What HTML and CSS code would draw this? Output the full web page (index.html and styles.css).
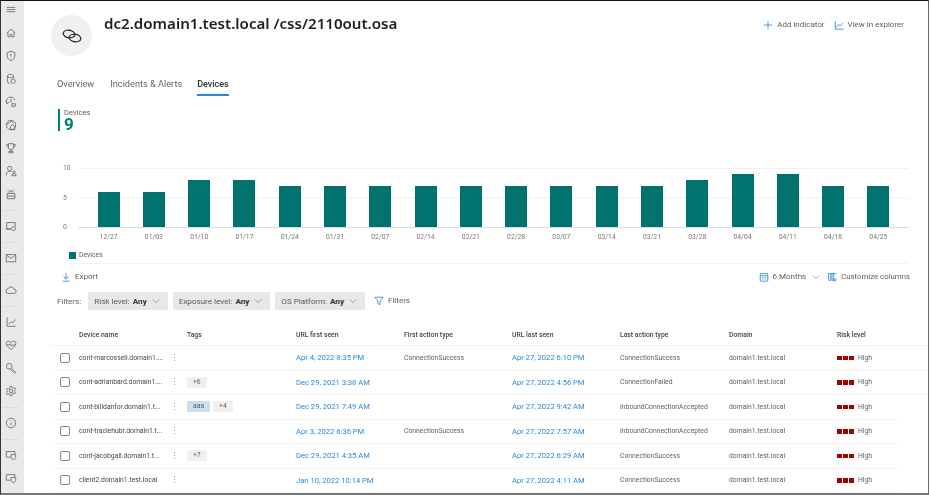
FILE: index.html
```html
<!DOCTYPE html>
<html lang="en">
<head>
    <meta charset="UTF-8">
    <meta name="viewport" content="width=device-width, initial-scale=1.0">
    <title>dc2.domain1.test.local /css/2110out.osa</title>
    <link rel="stylesheet" href="styles.css">
</head>
<body>
    <svg class="hidden" aria-hidden="true">
        <symbol id="i-chevron" viewBox="0 0 10 10"><path d="M1 3l4 4 4-4"/></symbol>
    </svg>
    <div class="frame">
        <nav class="sidebar">
            <div class="nav-item nav-first"><svg viewBox="0 0 14 14"><path d="M2 4h10M2 6.500h10M2 9h10"/></svg></div>
            <div class="nav-item"><svg viewBox="0 0 14 14"><path d="M2 7l5-4.500L12 7M3.500 6v5.500h2.500V8.500h2v3h2.500V6"/></svg></div>
            <div class="nav-item"><svg viewBox="0 0 14 14"><path d="M7 1.500l4.500 1.500v4c0 3-2.500 4.500-4.500 5.500-2-1-4.500-2.500-4.500-5.500V3zM7 4.500v3M7 9v.8"/></svg></div>
            <div class="nav-item"><svg viewBox="0 0 14 14"><path d="M3 3.500C3 2 5 1.500 6.500 1.500S10 2 10 3.500v3M3 3.500v7c0 1 1.500 1.500 3 1.500M3 3.500c0 1.500 2 2 3.500 2S10 5 10 3.500"/><circle cx="9.500" cy="9.500" r="2.500"/></svg></div>
            <div class="nav-item"><svg viewBox="0 0 14 14"><path d="M2.500 9A5 5 0 1 1 11.500 5M1 6l1.500 3L5 7"/><path d="M7 3v4h1M8 9h4v3H8z"/></svg></div>
            <div class="nav-item"><svg viewBox="0 0 14 14"><circle cx="7" cy="7" r="5.500"/><path d="M3 7a4 4 0 0 1 7-2.500M6.500 8.500l2-2 3 2v4h-5z"/></svg></div>
            <div class="nav-item"><svg viewBox="0 0 14 14"><path d="M4 2h6v4a3 3 0 0 1-6 0zM4 3H2c0 2 .8 3 2.300 3.500M10 3h2c0 2-.8 3-2.300 3.500M7 9v2M4.500 12.500h5v-1.500h-5z"/></svg></div>
            <div class="nav-item"><svg viewBox="0 0 14 14"><circle cx="5.500" cy="4" r="2.500"/><path d="M1.500 12c0-3 1.500-4.500 4-4.500 1 0 1.500.2 2 .5"/><circle cx="10.500" cy="8.500" r="1.500"/><path d="M8 12.500c0-1.500 1-2.500 2.500-2.500s2.500 1 2.500 2.500z"/></svg></div>
            <div class="nav-item"><svg viewBox="0 0 14 14"><path d="M2.500 6.500h9v6h-9zM2.500 9.500h9M5 2l2 3 2-3M3 3.500L5 5.500M11 3.500L9 5.500"/></svg></div>
            <div class="nav-sep"></div>
            <div class="nav-item"><svg viewBox="0 0 14 14"><path d="M7 10.500H2V3h10v4.500M1 10.500h6"/><circle cx="10" cy="10" r="2.300"/></svg></div>
            <div class="nav-sep"></div>
            <div class="nav-item"><svg viewBox="0 0 14 14"><path d="M1.500 3h11v8.500h-11zM1.500 3.500L7 7.500l5.500-4"/></svg></div>
            <div class="nav-sep"></div>
            <div class="nav-item"><svg viewBox="0 0 14 14"><path d="M4 11a2.700 2.700 0 0 1-.3-5.400A3.500 3.500 0 0 1 10.400 6 2.500 2.500 0 0 1 10.500 11z"/></svg></div>
            <div class="nav-sep"></div>
            <div class="nav-item"><svg viewBox="0 0 14 14"><path d="M2.500 1.500v10.500h10M4 9.500l3-3 2 1.500 3.500-4"/></svg></div>
            <div class="nav-item"><svg viewBox="0 0 14 14"><path d="M7 12.500L2 7.500C.5 5.500 1.500 2.500 4 2.500c1.500 0 2.500 1 3 2 .5-1 1.500-2 3-2 2.500 0 3.500 3 2 5zM2 7h3l1-1.500L7.500 8.500 8.500 7H12"/></svg></div>
            <div class="nav-item"><svg viewBox="0 0 14 14"><circle cx="5" cy="5" r="3.300"/><path d="M7.500 7.500l5 4.500-1.200 1.200-5-4.500"/></svg></div>
            <div class="nav-item"><svg viewBox="0 0 14 14"><circle cx="7" cy="7" r="2"/><path d="M6 1.500h2l.4 1.600 1.500.7 1.500-.8 1 1.700-1.200 1.100v1.600l1.200 1.100-1 1.700-1.500-.8-1.500.7L8 12.500H6l-.4-1.600-1.500-.7-1.500.8-1-1.700 1.200-1.100V6.600L1.600 5.500l1-1.700 1.500.8 1.500-.7z"/></svg></div>
            <div class="nav-sep"></div>
            <div class="nav-item"><svg viewBox="0 0 14 14"><circle cx="7" cy="7" r="5.500"/><path d="M7 6.500V10M7 4v1"/></svg></div>
            <div class="nav-sep"></div>
            <div class="nav-item"><svg viewBox="0 0 14 14"><path d="M6.500 9.500H1.500V3h10v3"/><path d="M7 6.500h5.500v3c0 1.500-1.500 2.500-2.700 3-1.300-.5-2.800-1.500-2.800-3z"/></svg></div>
            <div class="nav-item"><svg viewBox="0 0 14 14"><path d="M6.500 9.500H1.500V3h10v3"/><path d="M7 6.500h5.500v3c0 1.500-1.500 2.500-2.700 3-1.300-.5-2.800-1.500-2.800-3z"/></svg></div>
        </nav>

        <main class="content">
            <header class="page-header">
                <div class="avatar">
                    <svg viewBox="0 0 20 14"><ellipse cx="7" cy="5" rx="5.800" ry="3.800" transform="rotate(8 7 5)"/><ellipse cx="13" cy="9" rx="5.800" ry="3.800" transform="rotate(8 13 9)"/></svg>
                </div>
                <h1>dc2.domain1.test.local /css/2110out.osa</h1>
                <div class="page-actions">
                    <span class="action"><svg class="icon-blue" viewBox="0 0 12 12"><path d="M6 1v10M1 6h10"/></svg>Add indicator</span>
                    <span class="action"><svg class="icon-blue" viewBox="0 0 12 12"><path d="M1.500 1.500v9.500h10M2.500 8.500l3-3 2 1.500 3.500-3.500"/></svg>View in explorer</span>
                </div>
            </header>

            <div class="tabs">
                <span class="tab">Overview</span>
                <span class="tab">Incidents &amp; Alerts</span>
                <span class="tab tab-active">Devices</span>
            </div>

            <div class="stat">
                <span class="stat-label">Devices</span>
                <span class="stat-value">9</span>
            </div>

            <section class="chart">
                <div class="y-axis"><span>10</span><span>5</span><span>0</span></div>
                <div class="chart-body">
                    <div class="plot">
                        <div class="bar-slot"><div class="bar" style="height: 60%"></div></div>
                        <div class="bar-slot"><div class="bar" style="height: 60%"></div></div>
                        <div class="bar-slot"><div class="bar" style="height: 80%"></div></div>
                        <div class="bar-slot"><div class="bar" style="height: 80%"></div></div>
                        <div class="bar-slot"><div class="bar" style="height: 70%"></div></div>
                        <div class="bar-slot"><div class="bar" style="height: 70%"></div></div>
                        <div class="bar-slot"><div class="bar" style="height: 70%"></div></div>
                        <div class="bar-slot"><div class="bar" style="height: 70%"></div></div>
                        <div class="bar-slot"><div class="bar" style="height: 70%"></div></div>
                        <div class="bar-slot"><div class="bar" style="height: 70%"></div></div>
                        <div class="bar-slot"><div class="bar" style="height: 70%"></div></div>
                        <div class="bar-slot"><div class="bar" style="height: 70%"></div></div>
                        <div class="bar-slot"><div class="bar" style="height: 70%"></div></div>
                        <div class="bar-slot"><div class="bar" style="height: 80%"></div></div>
                        <div class="bar-slot"><div class="bar" style="height: 90%"></div></div>
                        <div class="bar-slot"><div class="bar" style="height: 90%"></div></div>
                        <div class="bar-slot"><div class="bar" style="height: 70%"></div></div>
                        <div class="bar-slot"><div class="bar" style="height: 70%"></div></div>
                    </div>
                    <div class="x-axis">
                        <span>12/27</span><span>01/03</span><span>01/10</span><span>01/17</span><span>01/24</span><span>01/31</span>
                        <span>02/07</span><span>02/14</span><span>02/21</span><span>02/28</span><span>03/07</span><span>03/14</span>
                        <span>03/21</span><span>03/28</span><span>04/04</span><span>04/11</span><span>04/18</span><span>04/25</span>
                    </div>
                </div>
            </section>

            <div class="legend"><span class="legend-swatch"></span>Devices</div>

            <div class="toolbar">
                <span class="action"><svg class="icon-blue" viewBox="0 0 12 12"><path d="M6 1v7M3 5.500L6 8.500l3-3M2 11h8"/></svg>Export</span>
                <div class="toolbar-right">
                    <span class="action"><svg class="icon-blue" viewBox="0 0 12 12"><path d="M1.500 2h9v9h-9zM1.500 4.500h9M3.500 6.500h1M5.500 6.500h1M7.500 6.500h1M3.500 8.500h1M5.500 8.500h1M7.500 8.500h1"/></svg>6 Months<svg class="chevron"><use href="#i-chevron"/></svg></span>
                    <span class="action action-tight"><svg class="icon-blue" viewBox="0 0 12 12"><path d="M1 2h10M2 2v8h2.500V2M6 2v8h2V2"/><circle cx="9.500" cy="9.500" r="1.500"/></svg>Customize columns</span>
                </div>
            </div>

            <div class="filters">
                <span class="filters-label">Filters:</span>
                <span class="pill">Risk level: <b>Any</b><svg class="chevron"><use href="#i-chevron"/></svg></span>
                <span class="pill">Exposure level: <b>Any</b><svg class="chevron"><use href="#i-chevron"/></svg></span>
                <span class="pill">OS Platform: <b>Any</b><svg class="chevron"><use href="#i-chevron"/></svg></span>
                <span class="action filters-btn"><svg class="icon-blue" viewBox="0 0 12 12"><path d="M1 1.500h10L7.200 6v4.500L4.800 9V6z"/></svg>Filters</span>
            </div>

            <div class="table">
                <div class="row row-head">
                    <span></span><span>Device name</span><span></span><span>Tags</span><span>URL first seen</span><span>First action type</span><span>URL last seen</span><span>Last action type</span><span>Domain</span><span>Risk level</span>
                </div>
                <div class="row">
                    <span class="check"></span><span class="name">cont-marcossell.domain1....</span><span class="kebab">⋮</span><span class="tags"></span>
                    <span class="link">Apr 4, 2022 8:35 PM</span><span>ConnectionSuccess</span><span class="link">Apr 27, 2022 6:10 PM</span><span>ConnectionSuccess</span><span>domain1.test.local</span>
                    <span class="risk"><i></i><i></i><i></i>High</span>
                </div>
                <div class="row">
                    <span class="check"></span><span class="name">cont-adrianbard.domain1....</span><span class="kebab">⋮</span><span class="tags"><em>+6</em></span>
                    <span class="link">Dec 29, 2021 3:38 AM</span><span></span><span class="link">Apr 27, 2022 4:56 PM</span><span>ConnectionFailed</span><span>domain1.test.local</span>
                    <span class="risk"><i></i><i></i><i></i>High</span>
                </div>
                <div class="row row-short">
                    <span class="check"></span><span class="name">cont-billdanfor.domain1.t...</span><span class="kebab">⋮</span><span class="tags"><em class="tag-blue">aaa</em><em>+4</em></span>
                    <span class="link">Dec 29, 2021 7:49 AM</span><span></span><span class="link">Apr 27, 2022 9:42 AM</span><span>InboundConnectionAccepted</span><span>domain1.test.local</span>
                    <span class="risk"><i></i><i></i><i></i>High</span>
                </div>
                <div class="row row-short">
                    <span class="check"></span><span class="name">cont-traciehubr.domain1.t...</span><span class="kebab">⋮</span><span class="tags"></span>
                    <span class="link">Apr 3, 2022 6:36 PM</span><span>ConnectionSuccess</span><span class="link">Apr 27, 2022 7:57 AM</span><span>InboundConnectionAccepted</span><span>domain1.test.local</span>
                    <span class="risk"><i></i><i></i><i></i>High</span>
                </div>
                <div class="row row-short">
                    <span class="check"></span><span class="name">cont-jacobgall.domain1.t...</span><span class="kebab">⋮</span><span class="tags"><em>+7</em></span>
                    <span class="link">Dec 29, 2021 4:35 AM</span><span></span><span class="link">Apr 27, 2022 6:29 AM</span><span>ConnectionSuccess</span><span>domain1.test.local</span>
                    <span class="risk"><i></i><i></i><i></i>High</span>
                </div>
                <div class="row row-short">
                    <span class="check"></span><span class="name">client2.domain1.test.local</span><span class="kebab">⋮</span><span class="tags"></span>
                    <span class="link">Jan 10, 2022 10:14 PM</span><span></span><span class="link">Apr 27, 2022 4:11 AM</span><span>ConnectionSuccess</span><span>domain1.test.local</span>
                    <span class="risk"><i></i><i></i><i></i>High</span>
                </div>
            </div>
        </main>
    </div>
</body>
</html>
```

FILE: styles.css
```css
html, body {
    margin: 0;
    height: 100%;
    background-color: #fff;
    overflow: hidden;
}

body {
    font-family: Roboto, "Noto Sans", sans-serif;
    font-size: 6.8px;
    color: #605e5c;
}

svg {
    fill: none;
    stroke: currentColor;
}

.hidden {
    display: none;
}

.frame {
    box-sizing: border-box;
    display: flex;
    width: 929px;
    height: 495px;
    border-top: 1px solid #111;
    border-left: 1px solid #333;
    border-right: 1px solid #666;
    border-bottom: 2px solid #777;
    overflow: hidden;
    filter: blur(.3px);
}

/* left nav */
.sidebar {
    flex: 0 0 23px;
    display: flex;
    flex-direction: column;
    background-color: #e9e9e9;
    color: #6b6b6b;
}

.nav-item {
    flex: 0 0 23px;
    display: flex;
    align-items: center;
    justify-content: center;
    padding-right: 4px;
}

.nav-item svg {
    width: 12px;
    height: 12px;
    stroke-width: 1;
}

.nav-first {
    flex-basis: 18px;
    margin-bottom: 2px;
}

.nav-sep {
    flex: 0 0 1px;
    margin: 5px 5px 3px 2px;
    background-color: #dcdcdc;
}

.content {
    flex: 1;
    min-width: 0;
    padding-left: 27px;
}

/* header */
.page-header {
    display: flex;
    align-items: flex-start;
    padding-top: 14px;
    height: 41px;
}

.avatar {
    flex: 0 0 41px;
    height: 41px;
    border-radius: 50%;
    background-color: #f0f0f0;
    display: flex;
    align-items: center;
    justify-content: center;
    color: #323130;
}

.avatar svg {
    width: 20px;
    height: 14px;
    stroke-width: 1.4;
}

h1 {
    margin: -2px 0 0 12px;
    font-family: "Noto Sans", sans-serif;
    font-size: 15.1px;
    line-height: 20px;
    font-weight: 600;
    color: #201f1e;
}

.page-actions {
    margin-left: auto;
    margin-right: 24px;
    display: flex;
    gap: 9px;
    padding-top: 2px;
}

.action {
    display: inline-flex;
    align-items: center;
    gap: 4px;
    font-size: 8px;
    line-height: 16px;
    color: #605e5c;
    white-space: nowrap;
}

.action-tight {
    font-size: 7.8px;
}

.icon-blue {
    width: 10px;
    height: 10px;
    color: #2b88d8;
    stroke-width: 1;
}

.chevron {
    width: 8px;
    height: 8px;
    stroke-width: .8;
    color: #777;
}

/* tabs */
.tabs {
    display: flex;
    gap: 16px;
    margin: 19px 0 0 6px;
    height: 21px;
}

.tab {
    box-sizing: border-box;
    height: 21px;
    line-height: 18px;
    font-size: 9.2px;
    color: #666;
}

.tab-active {
    margin-left: -1px;
    font-size: 9px;
    color: #323130;
    font-weight: 500;
    border-bottom: 2px solid #2b88d8;
}

/* devices count */
.stat {
    display: flex;
    flex-direction: column;
    margin: 13px 0 0 7px;
    height: 22px;
    padding-left: 4px;
    border-left: 2px solid #037c7c;
}

.stat-label {
    font-size: 7.6px;
    line-height: 8px;
}

.stat-value {
    font-size: 17px;
    line-height: 15px;
    font-weight: 700;
    color: #037c7c;
}

/* chart */
.chart {
    display: flex;
    margin: 32px 0 0 12px;
    height: 78px;
}

.y-axis {
    flex: 0 0 15px;
    height: 69px;
    display: flex;
    flex-direction: column;
    justify-content: space-between;
    font-size: 6.8px;
    line-height: 10px;
    color: #777;
}

.chart-body {
    flex: 0 0 831px;
    padding-top: 5px;
}

.plot {
    height: 59px;
    padding: 0 8px;
    display: grid;
    grid-template-columns: repeat(18, 1fr);
    border-bottom: 1px solid #d3ddef;
    background: linear-gradient(#eef0f4 1px, transparent 1px) 0 0 / 100% 50%;
}

.bar-slot {
    display: flex;
    align-items: flex-end;
    justify-content: center;
}

.bar {
    width: 22px;
    background-color: #00736f;
}

.x-axis {
    padding: 0 8px;
    display: grid;
    grid-template-columns: repeat(18, 1fr);
    text-align: center;
    font-size: 6.8px;
    line-height: 18px;
    color: #777;
}

.legend {
    display: flex;
    align-items: center;
    gap: 3px;
    margin: 8px 20px 0 18px;
    height: 12px;
    font-size: 6.8px;
    border-bottom: 1px solid #f3f3f3;
    padding-bottom: 2px;
}

.legend-swatch {
    width: 7px;
    height: 7px;
    background-color: #00736f;
}

/* toolbar and filters */
.toolbar {
    display: flex;
    justify-content: space-between;
    align-items: center;
    height: 25px;
    margin: 0 18px 0 10px;
}

.toolbar-right {
    display: flex;
    gap: 7px;
}

.toolbar-right .chevron {
    margin-left: 2px;
}

.filters {
    display: flex;
    align-items: center;
    gap: 5px;
    margin: 3px 0 0 6px;
    height: 18px;
    font-size: 8.1px;
}

.filters-label {
    margin-right: 2px;
}

.pill {
    display: inline-flex;
    align-items: center;
    gap: 3px;
    height: 18px;
    padding: 0 8px 0 6px;
    background-color: #e8e8e8;
    white-space: nowrap;
}

.pill .chevron {
    margin-left: 2px;
}

.pill b {
    font-weight: 700;
    color: #323130;
}

.filters-btn {
    margin-left: 4px;
}

/* table */
.table {
    margin: 12px 0 0 1px;
}

.row {
    display: grid;
    grid-template-columns: 27px 88px 20px 109px 108px 108px 108px 109px 108px 88px;
    align-items: center;
    height: 24.5px;
    width: 876px;
    border-bottom: 1px solid #f3f3f3;
    box-sizing: border-box;
    white-space: nowrap;
}

.row-short {
    width: 848px;
    grid-template-columns: 27px 88px 20px 109px 108px 108px 108px 109px 108px 60px;
}

.row-head {
    height: 24px;
    color: #484644;
    font-weight: 500;
    padding-top: 2px;
}

.check {
    box-sizing: border-box;
    width: 10px;
    height: 10px;
    margin-left: 8px;
    border: 1px solid #8a8886;
    border-radius: 2px;
}

.name {
    color: #484644;
}

.kebab {
    text-align: center;
    color: #999;
    padding-right: 6px;
    font-size: 9px;
}

.tags {
    display: flex;
    gap: 3px;
}

.tags em {
    font-style: normal;
    padding: 1px 6px;
    line-height: 9px;
    background-color: #f0f0f0;
    border-radius: 1px;
}

.tags .tag-blue {
    background-color: #c7e0f4;
}

.link {
    font-size: 7.6px;
    color: #2b88d8;
}

.risk {
    display: flex;
    align-items: center;
    gap: 1px;
}

.risk i {
    width: 5px;
    height: 4.500px;
    background-color: #a80000;
}

.risk i:nth-child(3) {
    margin-right: 3px;
}
```
